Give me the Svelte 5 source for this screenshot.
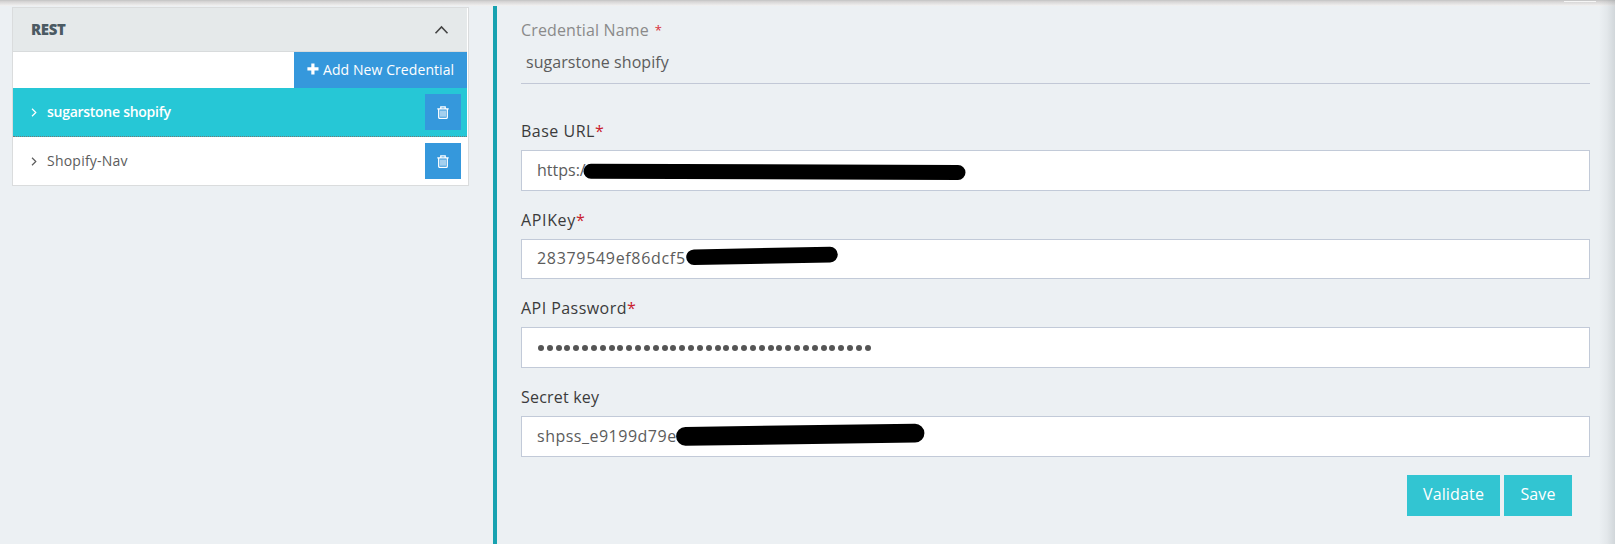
<script>
  const credentials = [
    { name: 'sugarstone shopify', active: true, spacing: -0.27 },
    { name: 'Shopify-Nav', active: false, spacing: 0.22 }
  ];
  const fields = [
    { label: 'Base URL', ls: 0.5, required: true, value: 'https://', vs: 0, mark: [591, 21.2, 958, 22.5, 15] },
    { label: 'APIKey', ls: 0.65, required: true, value: '28379549ef86dcf5', vs: 0.68, mark: [694, 18.2, 830, 15.6, 15.6] },
    { label: 'API Password', ls: 0.45, required: true, secret: 38 },
    { label: 'Secret key', ls: 0.2, required: false, value: 'shpss_e9199d79e', vs: 0.5, mark: [685.5, 20.3, 915, 17.2, 18.8] }
  ];
</script>

<div class="page">
  <div class="topbar"></div>
  <aside>
    <section class="panel">
      <header>
        <span class="rest">REST</span>
        <svg width="15" height="10" viewBox="0 0 15 10"><path d="M1.5 8.2 7.5 2l6 6.2" fill="none" stroke="#444" stroke-width="1.6" /></svg>
      </header>
      <div class="tools">
        <button class="add">
          <svg width="12" height="12" viewBox="0 0 12 12"><path d="M4.3.5h3.2v3.8h4v3.2h-4v4H4.3v-4H.4V4.3h3.9z" fill="#fff" /></svg>
          <span>Add New Credential</span>
        </button>
      </div>
      {#each credentials as c}
        <div class="row" class:active={c.active}>
          <svg class="chev" width="6" height="9" viewBox="0 0 6 9"><path d="M1 .8 4.8 4.5 1 8.2" fill="none" stroke="currentColor" stroke-width="1.2" /></svg>
          <span class="name" style="letter-spacing:{c.spacing}px">{c.name}</span>
          <button class="trash" aria-label="Delete">
            <svg width="12" height="13" viewBox="0 0 12 13" fill="none" stroke="#fff"><path d="M.3 2.8h11.4M3.8 2.5V.8h4.4v1.7M1.7 3v8.2q0 1.2 1.2 1.2h6.2q1.2 0 1.2-1.2V3" stroke-width="1.3" /><path d="M4 4.5v6.2M6 4.5v6.2M8 4.5v6.2" stroke-width="1.1" /></svg>
          </button>
        </div>
      {/each}
    </section>
  </aside>
  <main>
    <div class="credname">
      <div class="cl"><span>Credential Name</span><i>*</i></div>
      <div class="cv">sugarstone shopify</div>
    </div>
    {#each fields as f}
      <div class="field">
        <div class="label"><span style="letter-spacing:{f.ls}px">{f.label}</span>{#if f.required}<i>*</i>{/if}</div>
        <div class="input">
          {#if f.secret}
            <div class="dots">{#each Array(f.secret) as _}<b></b>{/each}</div>
          {:else}
            <span style="letter-spacing:{f.vs}px">{f.value}</span>
          {/if}
          {#if f.mark}
            <svg class="mark" viewBox="521 0 1069 41"><line x1={f.mark[0]} y1={f.mark[1]} x2={f.mark[2]} y2={f.mark[3]} stroke-width={f.mark[4]} stroke="#000" stroke-linecap="round" /></svg>
          {/if}
        </div>
      </div>
    {/each}
    <footer><button class="v">Validate</button><button class="s">Save</button></footer>
  </main>
  <div class="edge"></div>
</div>

<style>
  :global(body) { margin: 0; }
  .page { position: relative; box-sizing: border-box; display: flex; width: 1615px; height: 544px; padding-top: 6px; overflow: hidden; background: #ecf0f3; color: #5c5c5c; font-family: "Open Sans", sans-serif; }
  .topbar { position: absolute; inset: 0 0 auto; height: 6px; background: linear-gradient(#c8c8c8 0 1px, #d2d0d0 1px, #f2f2f2 6px); }
  .topbar::after { content: ""; position: absolute; left: 1564px; top: 1px; width: 32px; height: 1px; background: #f5f5f5; }
  .edge { position: absolute; right: 0; top: 0; width: 16px; height: 544px; background: linear-gradient(to right, rgba(120, 130, 135, 0), rgba(120, 130, 135, .08) 50%, rgba(120, 130, 135, .23)); }
  button { border: 0; padding: 0; margin: 0; color: #fff; font-family: inherit; }
  aside { box-sizing: border-box; width: 493px; padding: 1px 0 0 12px; }
  .panel { box-sizing: border-box; width: 457px; height: 179px; border: 1px solid #dadcdd; background: #fff; padding-right: 1px; }
  header { display: flex; align-items: center; justify-content: space-between; box-sizing: border-box; height: 44px; padding: 0 18px; background: #e5e9ea; border-bottom: 1px solid #d8dbdc; }
  .rest { font-size: 15px; font-weight: 800; letter-spacing: -.35px; color: #4b5a63; line-height: 20px; padding-bottom: 1px; }
  .tools { display: flex; justify-content: flex-end; height: 36px; }
  .add { display: flex; align-items: center; gap: 4px; width: 173px; padding: 0 0 2px 13px; background: #3598dc; font-size: 14px; letter-spacing: .08px; white-space: nowrap; }
  .row { display: flex; align-items: center; height: 48px; box-sizing: border-box; padding: 0 6px 0 18px; font-size: 14px; }
  .row.active { height: 49px; background: #26c7d6; color: #fff; border-bottom: 1px dotted #777; }
  .active .name { font-weight: 600; }
  .name { margin-left: 10px; flex: 1; padding-bottom: 1px; }
  .trash { display: flex; align-items: center; justify-content: center; width: 36px; height: 36px; background: #3598dc; }
  main { box-sizing: border-box; width: 1097px; border-left: 4px solid #17a2b0; padding-left: 24px; font-size: 16px; }
  i { font-style: normal; color: #d9303c; }
  .credname { height: 78px; box-sizing: border-box; border-bottom: 1px solid #c2c8d6; padding-top: 12px; }
  .cl { display: flex; height: 24px; line-height: 24px; color: #8a8a8a; letter-spacing: .14px; }
  .cl i { font-size: 13px; margin-left: 6px; }
  .cv { padding: 8px 0 0 5px; line-height: 24px; letter-spacing: .06px; }
  .field { height: 88.67px; }
  .credname + .field { margin-top: 35px; }
  .label { height: 31px; line-height: 24px; color: #3b3b3b; white-space: nowrap; }
  .label i { color: #c9202c; }
  .input { position: relative; display: flex; align-items: center; box-sizing: border-box; height: 40.67px; padding-left: 15px; border: 1px solid #c2cad8; background: #fff; }
  .input span { padding-bottom: 1px; }
  .mark { position: absolute; left: -1px; top: -1px; width: 1069px; height: 41px; }
  .dots { display: flex; gap: 2.83px; padding-left: 1px; }
  .dots b { width: 6px; height: 6px; border-radius: 50%; background: #555; }
  footer { display: flex; justify-content: flex-end; gap: 4px; padding-right: 18px; margin-top: 1px; }
  footer button { height: 41px; background: #32c5d2; font-size: 16px; letter-spacing: .15px; padding-bottom: 3px; }
  .v { width: 93px; }
  .s { width: 68px; }
</style>
